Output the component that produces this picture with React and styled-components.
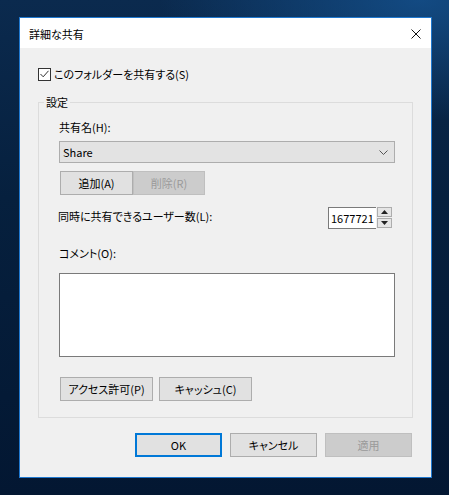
import React from 'react';
import styled, { createGlobalStyle } from 'styled-components';

const GlobalStyle = createGlobalStyle`
  html, body {
    margin: 0;
    padding: 0;
  }
  body {
    width: 449px;
    height: 495px;
    overflow: hidden;
    background:
      radial-gradient(ellipse 260px 120px at 420px 0px, rgba(20, 80, 140, 0.85), rgba(20, 80, 140, 0) 100%),
      linear-gradient(180deg, #0b2a4e 0%, #06203e 40%, #031732 100%);
    font-family: "Noto Sans CJK JP", "Noto Sans", sans-serif;
    font-size: 11px;
    font-feature-settings: "palt";
    color: #000;
  }
`;

const Desktop = styled.div`
  padding: 17px 0 0 19px;
`;

const Window = styled.div`
  width: 411px;
  height: 459px;
  border: 1px solid #1f78cf;
  background: #f0f0f0;
  display: flex;
  flex-direction: column;
`;

const TitleBar = styled.div`
  height: 30px;
  background: #fff;
  display: flex;
  align-items: center;
  justify-content: space-between;
  padding: 0 10px 0 9px;
  flex-shrink: 0;
`;

const Title = styled.span`
  font-size: 11px;
  line-height: 16px;
  margin-top: 1px;
`;

const CloseButton = styled.div`
  width: 10px;
  height: 10px;
  display: flex;
  margin-top: 1px;
`;

const Body = styled.div`
  flex: 1;
  padding: 19px 19px 0 18px;
  display: flex;
  flex-direction: column;
`;

const CheckRow = styled.label`
  display: flex;
  align-items: center;
  height: 14px;
  gap: 3px;
`;

const CheckBox = styled.span`
  width: 11px;
  height: 11px;
  border: 1px solid #333;
  background: #fff;
  display: flex;
  align-items: center;
  justify-content: center;
`;

const Label = styled.span`
  line-height: 16px;
  white-space: nowrap;
`;

const Group = styled.div`
  position: relative;
  margin-top: 21px;
  width: 375px;
  height: 316px;
  box-sizing: border-box;
  border: 1px solid #dcdcdc;
  padding: 16px 17px 0 20px;
  display: flex;
  flex-direction: column;
`;

const GroupCaption = styled.span`
  position: absolute;
  top: -9px;
  left: 5px;
  padding: 0 2px;
  background: #f0f0f0;
  line-height: 16px;
`;

const Combo = styled.div`
  margin-top: 6px;
  height: 22px;
  width: 336px;
  box-sizing: border-box;
  border: 1px solid #adadad;
  background: #e3e3e3;
  display: flex;
  align-items: center;
  justify-content: space-between;
  padding: 0 6px 0 3px;
`;

const ButtonRow = styled.div`
  display: flex;
  gap: ${p => p.gap || 0}px;
  margin-top: ${p => p.top || 0}px;
  justify-content: ${p => p.end ? 'flex-end' : 'flex-start'};
  padding-left: ${p => p.left || 0}px;
`;

const Button = styled.button`
  width: ${p => p.w}px;
  height: 24px;
  box-sizing: border-box;
  font-family: inherit;
  font-size: 11px;
  font-feature-settings: "palt";
  padding: 0;
  border: 1px solid ${p => p.disabled ? '#bfbfbf' : p.primary ? '#0078d7' : '#adadad'};
  box-shadow: ${p => p.primary ? 'inset 0 0 0 1px #0078d7' : 'none'};
  background: ${p => p.disabled ? '#cccccc' : '#e1e1e1'};
  color: ${p => p.disabled ? '#9a9a9a' : '#000'};
`;

const UsersRow = styled.div`
  margin-top: 12px;
  height: 22px;
  display: flex;
  align-items: center;
  justify-content: space-between;
  width: 333px;
`;

const UsersLabel = styled(Label)`
  margin-top: -4px;
  margin-left: -1px;
`;

const Spin = styled.div`
  display: flex;
  gap: 1px;
  height: 22px;
`;

const SpinInput = styled.div`
  width: 48px;
  height: 22px;
  box-sizing: border-box;
  border: 1px solid #7a7a7a;
  border-right: none;
  background: #fff;
  display: flex;
  align-items: center;
  padding-left: 2px;
  font-size: 11px;
  color: #000;
`;

const SpinButtons = styled.div`
  display: flex;
  flex-direction: column;
  gap: 1px;
`;

const SpinButton = styled.div`
  width: 15px;
  height: 10px;
  box-sizing: border-box;
  border: 1px solid #adadad;
  background: #e5e5e5;
  display: flex;
  align-items: center;
  justify-content: center;
`;

const CommentLabel = styled(Label)`
  margin-top: 16px;
`;

const CommentBox = styled.div`
  margin-top: 12px;
  width: 336px;
  height: 84px;
  box-sizing: border-box;
  border: 1px solid #7a7a7a;
  background: #fff;
`;

const Arrow = ({ up }) => (
  <svg width="7" height="4" viewBox="0 0 7 4">
    <path d={up ? 'M0 4 L3.5 0 L7 4 Z' : 'M0 0 L3.5 4 L7 0 Z'} fill="#222" />
  </svg>
);

const App = () => (
  <>
    <GlobalStyle />
    <Desktop>
      <Window>
        <TitleBar>
          <Title>詳細な共有</Title>
          <CloseButton>
            <svg width="10" height="10" viewBox="0 0 10 10">
              <path d="M0.5 0.5 L9.5 9.5 M9.5 0.5 L0.5 9.5" stroke="#111" strokeWidth="1" fill="none" />
            </svg>
          </CloseButton>
        </TitleBar>
        <Body>
          <CheckRow>
            <CheckBox>
              <svg width="9" height="8" viewBox="0 0 9 8">
                <path d="M0.5 4 L3.2 6.8 L8.5 0.8" stroke="#333" strokeWidth="1" fill="none" />
              </svg>
            </CheckBox>
            <Label>このフォルダーを共有する(S)</Label>
          </CheckRow>
          <Group>
            <GroupCaption>設定</GroupCaption>
            <Label>共有名(H):</Label>
            <Combo>
              <span>Share</span>
              <svg width="9" height="5" viewBox="0 0 9 5">
                <path d="M0.5 0.5 L4.5 4.5 L8.5 0.5" stroke="#555" strokeWidth="1" fill="none" />
              </svg>
            </Combo>
            <ButtonRow top={8} left={1}>
              <Button w={73}>追加(A)</Button>
              <Button w={72} disabled>削除(R)</Button>
            </ButtonRow>
            <UsersRow>
              <UsersLabel>同時に共有できるユーザー数(L):</UsersLabel>
              <Spin>
                <SpinInput>1677721</SpinInput>
                <SpinButtons>
                  <SpinButton><Arrow up /></SpinButton>
                  <SpinButton><Arrow /></SpinButton>
                </SpinButtons>
              </Spin>
            </UsersRow>
            <CommentLabel>コメント(O):</CommentLabel>
            <CommentBox />
            <ButtonRow top={20} gap={6} left={1}>
              <Button w={93}>アクセス許可(P)</Button>
              <Button w={93}>キャッシュ(C)</Button>
            </ButtonRow>
          </Group>
          <ButtonRow top={15} gap={8} end>
            <Button w={87} primary>OK</Button>
            <Button w={87}>キャンセル</Button>
            <Button w={87} disabled>適用</Button>
          </ButtonRow>
        </Body>
      </Window>
    </Desktop>
  </>
);

export default App;
